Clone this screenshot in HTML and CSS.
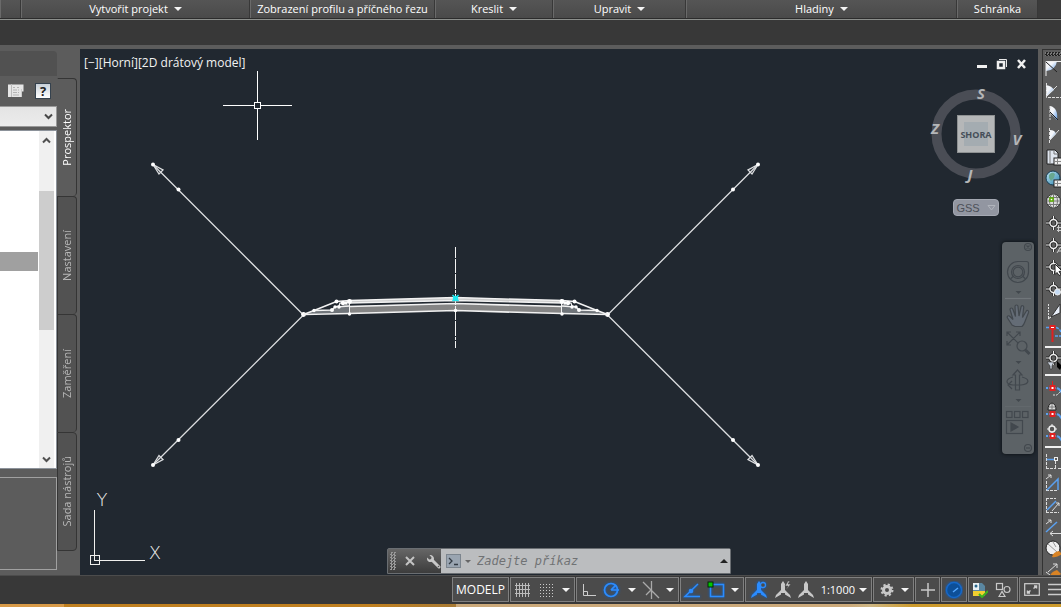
FILE: index.html
```html
<!DOCTYPE html>
<html lang="cs">
<head>
<meta charset="utf-8">
<meta name="viewport" content="width=device-width, initial-scale=1">
<title>Civil 3D</title>
<link rel="stylesheet" href="styles.css">
</head>
<body>
<svg class="defs" aria-hidden="true">
  <defs>
    <linearGradient id="sky" x1="0" y1="0" x2="1" y2="1"><stop offset=".4" stop-color="#f4f6fa"/><stop offset="1" stop-color="#5b9bea"/></linearGradient>
    <linearGradient id="ball" x1="0" y1="0" x2="1" y2="1"><stop offset="0" stop-color="#bfe6f4"/><stop offset="1" stop-color="#2d83ad"/></linearGradient>
    <filter id="glow" x="-40%" y="-40%" width="180%" height="180%"><feDropShadow dx="0" dy="0" stdDeviation="1.5" flood-color="#0a5fd0"/></filter>
    <symbol id="target" viewBox="0 0 16 22">
      <path d="M8.500 4v4M8.500 14v4M1 11h4M12 11h4" stroke="#222" stroke-width="3"/>
      <circle cx="8.500" cy="11" r="3.500" fill="none" stroke="#222" stroke-width="3"/>
      <path d="M8.500 4v4M8.500 14v4M1 11h4M12 11h4" stroke="#eee" stroke-width="1.200"/>
      <circle cx="8.500" cy="11" r="3.500" fill="none" stroke="#eee" stroke-width="1.400"/>
    </symbol>
    <symbol id="knot" viewBox="0 0 16 22">
      <path d="M1 14h2M12 14l2 1 3 4" stroke="#5aa0f0" stroke-width="2" fill="none"/>
      <path d="M4 14h7" stroke="#5aa0f0" stroke-width="2"/>
      <rect x="5.500" y="12" width="4" height="4" fill="#fff" stroke="#e02020" stroke-width="2"/>
    </symbol>
    <symbol id="compass" viewBox="0 0 18 20">
      <path d="M9 1l2 3v6l5 5 1 3-6-3.500V13H7v1.500L1 18l1-3 5-5V4z" fill="currentColor"/>
    </symbol>
  </defs>
</svg>

<header class="ribbon">
  <span class="ribbon-cell"></span>
  <button class="ribbon-cell">Vytvořit projekt<i class="caret"></i></button>
  <button class="ribbon-cell">Zobrazení profilu a příčného řezu</button>
  <button class="ribbon-cell">Kreslit<i class="caret"></i></button>
  <button class="ribbon-cell">Upravit<i class="caret"></i></button>
  <button class="ribbon-cell">Hladiny<i class="caret"></i></button>
  <button class="ribbon-cell">Schránka</button>
</header>
<div class="ribbon-gap"></div>

<main class="workspace">
  <aside class="toolspace">
    <section class="panel">
      <div class="panel-head"></div>
      <div class="panel-tools">
        <button aria-label="Panorama"><svg width="16" height="14" viewBox="0 0 16 14"><path d="M0 .5h15.500v7H13V13H0z" fill="#e6e6e6"/><path d="M3.500 0v13" stroke="#bbb"/><path d="M5 3.500h2M9 3.500h2M5 6h4M10 6h1M5 8.500h4M10 8.500h1M5 11h6" stroke="#b4b4b4"/><path d="M13.500 5v8" stroke="#ccc"/></svg></button>
        <button class="help" aria-label="Nápověda">?</button>
      </div>
      <div class="select-wrap">
        <select class="view-select" aria-label="Zobrazení"><option></option></select>
        <svg class="select-arrow" width="9" height="7" viewBox="0 0 9 7"><path d="M1 1.500l3.500 3.500 3.500-3.500" fill="none" stroke="#484848" stroke-width="2"/></svg>
      </div>
      <div class="tree">
        <div class="tree-body"><div class="tree-row"></div></div>
        <div class="scroll">
          <button aria-label="Nahoru"><svg width="9" height="7" viewBox="0 0 9 7"><path d="M1 5.500l3.500-3.500 3.500 3.500" fill="none" stroke="#505050" stroke-width="2"/></svg></button>
          <div class="scroll-track"><div class="thumb"></div></div>
          <button aria-label="Dolů"><svg width="9" height="7" viewBox="0 0 9 7"><path d="M1 1.500l3.500 3.500 3.500-3.500" fill="none" stroke="#505050" stroke-width="2"/></svg></button>
        </div>
      </div>
      <div class="preview"></div>
    </section>
    <nav class="tabs">
      <button class="tab active"><span>Prospektor</span></button>
      <button class="tab"><span>Nastavení</span></button>
      <button class="tab"><span>Zaměření</span></button>
      <button class="tab"><span>Sada nástrojů</span></button>
    </nav>
  </aside>

  <section class="viewport">
    <svg class="drawing" viewBox="80 49 958 526" fill="none" stroke="#f2f2f2">
      <g class="crisp" stroke="#fff"><path d="M223 105.500h31M261 105.500h31M257.500 71v31M257.500 109v31"/><rect x="254.500" y="102.500" width="6" height="6"/></g>
      <g stroke="#dcdee0" stroke-width="1.300">
        <path d="M153 164.500L303.500 315L153 465M758 164.500L607.500 315L758 465"/>
        <path d="M153 164.500l6 9.500 4-4zM153 465l6-9.500 4 4zM758 164.500l-6 9.500-4-4zM758 465l-6-9.500-4 4z"/>
      </g>
      <g fill="#fff" stroke="none">
        <circle cx="153" cy="164.500" r="2"/><circle cx="178.500" cy="189.500" r="2"/><circle cx="153" cy="465" r="2"/><circle cx="178.500" cy="440" r="2"/>
        <circle cx="758" cy="164.500" r="2"/><circle cx="733" cy="189.500" r="2"/><circle cx="758" cy="465" r="2"/><circle cx="733" cy="440" r="2"/>
        <circle cx="303.500" cy="314.500" r="2.400"/><circle cx="607.500" cy="314.500" r="2.400"/>
      </g>
      <path d="M349.500 306L455.500 303L562 306V313.500L455.500 310.500L349.500 313.500z" fill="#858585" stroke="none"/>
      <path d="M314 310.500L332 310L349.500 303V313L304 314zM597 310.500L579 310L562 303V313L607 314z" fill="#70757a" stroke="none"/>
      <path d="M349.500 300.500L455.500 297.500L562 300.500V303L455.500 300.500L349.500 303z" fill="#ccc" stroke-width="1.300"/>
      <path d="M349.500 306.500L455.500 303.500L562 306.500" stroke-width="1.700"/>
      <path d="M303.500 314.500L349.500 313.500L455.500 310.500L562 313.500L607.500 314.500" stroke-width="1.700"/>
      <path d="M303.500 314.500L314 310.500L336.500 301.500L349.500 300.500M607.500 314.500L597 310.500L574.500 301.500L562 300.500" stroke-width="1.700"/>
      <path d="M314 310.500L332 310L335 307L349.500 306M335 307l4-1 1-3 9-1M597 310.500L579 310L576 307L562 306M576 307l-4-1-1-3-9-1" stroke-width="1.300"/>
      <path d="M349.500 299v15M561.500 299v15"/>
      <g fill="#fff" stroke="none">
        <circle cx="336.500" cy="301.500" r="2"/><circle cx="314" cy="310.500" r="1.700"/><circle cx="332" cy="310" r="2"/><circle cx="335" cy="307" r="1.700"/><circle cx="339" cy="307" r="1.700"/><circle cx="343" cy="303" r="2.200"/><circle cx="346" cy="303" r="1.700"/><circle cx="349.500" cy="301.500" r="2.400"/><circle cx="349.500" cy="314" r="1.700"/>
        <circle cx="574.500" cy="301.500" r="2"/><circle cx="597" cy="310.500" r="1.700"/><circle cx="579" cy="310" r="2"/><circle cx="576" cy="307" r="1.700"/><circle cx="572" cy="307" r="1.700"/><circle cx="568" cy="303" r="2.200"/><circle cx="565" cy="303" r="1.700"/><circle cx="562" cy="301.500" r="2.400"/><circle cx="562" cy="314" r="1.700"/>
      </g>
      <path class="crisp" d="M455.500 247v101" stroke-dasharray="11 1 14 1 15 1 3 1"/>
      <circle cx="455.500" cy="310.500" r="1.700" fill="#fff" stroke="none"/>
      <path d="M452.500 295l6 6M452.500 301l6-6" stroke="#20e8f0" stroke-width="1.500"/><circle cx="455.500" cy="298.500" r="2.700" fill="#20e8f0" stroke="none"/>
      <g class="crisp" stroke="#f0f0ee"><path d="M94.500 510v50.500H145"/><rect x="90.500" y="555.500" width="9" height="9"/></g>
      <text class="axis" x="102" y="506">Y</text><text class="axis" x="155" y="559">X</text>
    </svg>

    <h1 class="view-label">[−][Horní][2D drátový model]</h1>

    <div class="window-buttons">
      <button aria-label="Minimalizovat"><svg width="12" height="12" viewBox="0 0 12 12"><path d="M1 8.500h10" stroke="#f0f0f0" stroke-width="3"/></svg></button>
      <button aria-label="Obnovit"><svg width="12" height="12" viewBox="0 0 12 12"><path d="M3 1.500h7.500V9" fill="none" stroke="#e8e8e8"/><rect x="2" y="4" width="6" height="6" fill="none" stroke="#f0f0f0" stroke-width="2.500"/></svg></button>
      <button aria-label="Zavřít"><svg width="12" height="12" viewBox="0 0 12 12"><path d="M2 2l7 8M9 2l-7 8" stroke="#f0f0f0" stroke-width="2.500"/></svg></button>
    </div>

    <div class="cube">
      <svg width="96" height="100" viewBox="928 84 96 100">
        <circle cx="976" cy="134" r="39.500" fill="none" stroke="#4a4d55" stroke-width="10"/>
        <rect x="957.500" y="115.500" width="37" height="37" fill="#b5b7b8" stroke="#8e9192"/>
        <rect x="964" y="122" width="24" height="24" fill="#a4acb1"/>
        <text class="cube-face" x="976" y="138">SHORA</text>
        <text class="cube-dir" x="981" y="99">S</text><text class="cube-dir" x="935" y="134">Z</text>
        <text class="cube-dir" x="1017" y="145">V</text><text class="cube-dir" x="970" y="180">J</text>
      </svg>
      <button class="ucs">GSS<svg width="9" height="6" viewBox="0 0 9 6"><path d="M1 .5h7L4.500 5z" fill="none" stroke="#b0b4bc"/></svg></button>
    </div>

    <nav class="navbar" aria-label="Navigace">
      <svg width="32" height="212" viewBox="1002 242 32 212" fill="none" stroke="#42484e" stroke-width="1.200">
        <circle cx="1028" cy="247" r="3.500"/><path d="M1026.500 245.500l3 3M1029.500 245.500l-3 3"/>
        <path d="M1028.500 272a10.500 10.500 0 1 1-10.500-10.500h8.500q2 0 2 2z"/><circle cx="1018" cy="272" r="6.500"/><circle cx="1018" cy="272" r="4.800"/><path d="M1010.500 279l3-3M1025.500 279l-3-3"/>
        <path d="M1015.500 291h6l-3 3z" fill="#42484e" stroke="none"/><path d="M1005 298.500h26" stroke="#70767a"/>
        <path d="M1012 325l-4.500-7c-1-2 1-3 2.500-1.500l3 3-3-10c0-2 2.500-2 3 0l2.500 7-.5-10c0-2 3-2 3 0l1 9.500 2-9c.5-2 3-1.500 2.700.5l-1.200 10 3.500-6c1-2 3-1 2.500 1l-3.500 9c-1 3-2 4-3 5h-7z" fill="#646c76"/>
        <path d="M1007 332l13 13M1020 332l-13 13M1007 336v-4h4M1016 332h4v4M1007 341v4h4"/><circle cx="1022" cy="346" r="5" fill="#5c6266"/><path d="M1025.500 350l4 4" stroke-width="3"/>
        <path d="M1015.500 361h6l-3 3zM1015.500 399h6l-3 3z" fill="#42484e" stroke="none"/>
        <path d="M1015.500 390v-15h-2.500l4.500-5 4.500 5h-2.500v15h-4z"/><path d="M1013 377c-8 2-8 7 0 8h8c9-1 9-6 1-8M1012 381l-4 4 4 4"/>
        <path d="M1005 406.500h26" stroke="#62686c"/>
        <rect x="1006.500" y="411.500" width="5.500" height="6"/><rect x="1014.500" y="411.500" width="5.500" height="6"/><rect x="1022.500" y="411.500" width="5.500" height="6"/>
        <rect x="1006.500" y="420.500" width="16" height="13"/><path d="M1011 423l7 4-7 4z" fill="#42484e"/>
        <circle cx="1028" cy="448" r="3.500"/><path d="M1026 448h4"/>
      </svg>
    </nav>

    <form class="command">
      <div class="command-grip">
        <i class="grip-dots"></i>
        <button type="button" aria-label="Zavřít"><svg width="10" height="10" viewBox="0 0 10 10"><path d="M1 1l8 8M9 1l-8 8" stroke="#c4c4c4" stroke-width="2"/></svg></button>
        <button type="button" aria-label="Přizpůsobit"><svg width="15" height="15" viewBox="0 0 15 15"><path d="M6 6l7 7" stroke="#c8c8c8" stroke-width="3" stroke-linecap="round"/><path d="M3.500 1.200l2 2-.3 2-2 .3-2-2C.5 6 2 8 4.500 8S8 6 8 4.500 6 .5 3.500 1.200z" fill="#c8c8c8"/><circle cx="12.500" cy="12.500" r=".8" fill="#555"/></svg></button>
      </div>
      <div class="command-box">
        <svg width="15" height="14" viewBox="0 0 15 14"><rect x=".5" y=".5" width="14" height="13" fill="#9aa5b1" stroke="#7c858e"/><path d="M3 4l3 3-3 3M8 10.500h4" fill="none" stroke="#333b44" stroke-width="1.300"/></svg>
        <i class="caret small"></i>
        <input type="text" placeholder="Zadejte příkaz" aria-label="Příkaz">
        <button type="button" aria-label="Historie"><i class="caret-up"></i></button>
      </div>
    </form>
  </section>

  <aside class="toolbar">
    <i class="toolbar-grip"></i>
    <button aria-label="Oblouk 1"><svg viewBox="0 0 16 22"><path d="M1 3h11a11 11 0 0 1-11 10z" fill="url(#sky)"/><path d="M1 18V3.500h15" stroke="#eee"/><path d="M1 4l11 10" stroke="#222"/></svg></button>
    <button aria-label="Oblouk 2"><svg viewBox="0 0 16 22"><path d="M1 5q6 1 8 5l-8 7z" fill="url(#sky)"/><path d="M1 17L12 6" stroke="#ddd"/><path d="M1.500 3v14.500H16" stroke="#ddd" stroke-dasharray="3 1"/></svg></button>
    <button aria-label="Oblouk 3"><svg viewBox="0 0 16 22"><path d="M5 4c6 1 8 7 7 14L5 11z" fill="url(#sky)"/><path d="M5 4v14" stroke="#ddd" stroke-dasharray="3 1"/><path d="M5 10l8 8" stroke="#222"/></svg></button>
    <button aria-label="Oblouk 4"><svg viewBox="0 0 16 22"><path d="M5 6q5 0 6 4l-6 6z" fill="url(#sky)"/><path d="M5 16l9-10" stroke="#ddd"/><path d="M4.500 4v15" stroke="#ddd" stroke-dasharray="3 1"/></svg></button>
    <button aria-label="Výkres"><svg viewBox="0 0 16 22"><path d="M2 4h8l3 3v11H2z" fill="#dfe5ee" stroke="#222"/><path d="M5 5v12M9 4v4h4" stroke="#777"/><rect x="9" y="12" width="8" height="7" fill="#eee" stroke="#222"/><path d="M9 15.500h7M12.500 12v7" stroke="#888"/></svg></button>
    <button aria-label="Glóbus"><svg viewBox="0 0 16 22"><circle cx="8" cy="10" r="7" fill="url(#ball)" stroke="#163a50"/><path d="M4 7q3-4 6-1l-1 4-3 3-2-3z" fill="#68a890"/><rect x="9" y="12" width="8" height="7" fill="#eee" stroke="#222"/><path d="M9 15.500h7M12.500 12v7" stroke="#888"/></svg></button>
    <button aria-label="Poloha"><svg viewBox="0 0 16 22"><circle cx="8.500" cy="11" r="7" fill="#ddd" stroke="#333"/><path d="M1.500 11h14M8.500 4v14M3 7.500h11M3 14.500h11" stroke="#777"/><ellipse cx="8.500" cy="11" rx="4" ry="7" stroke="#777"/><rect x="5" y="8" width="3" height="3" fill="#fff" stroke="#5aae00" stroke-width="1.500"/></svg></button>
    <button aria-label="Bod 1"><svg viewBox="0 0 16 22"><use href="#target"/><path d="M12 15.500h5M12 18.500h5M13.500 13v7" stroke="#ccc"/></svg></button>
    <button aria-label="Bod 2"><svg viewBox="0 0 16 22"><use href="#target"/><path d="M12 19l3.500-6 2 5M13 17h4" stroke="#ccc"/></svg></button>
    <button aria-label="Bod 3"><svg viewBox="0 0 16 22"><use href="#target"/><path d="M10 8l7 7-3 .5 2 3-2 1-2-3-2 2z" fill="#fff" stroke="#222"/></svg></button>
    <button aria-label="Bod 4"><svg viewBox="0 0 16 22"><use href="#target"/><circle cx="12.500" cy="14" r="3" fill="#c4daf4" stroke="#eee"/></svg></button>
    <button aria-label="Profil"><svg viewBox="0 0 16 22"><path d="M3.500 4v14" stroke="#ddd" stroke-dasharray="2 1"/><path d="M15 4v9l-9 4z" fill="#e8eef8" stroke="#333"/><path d="M6 17l-3 2" stroke="#fff"/></svg></button>
    <button aria-label="Trasa"><svg viewBox="0 0 16 22"><path d="M1 5.500h3M11 5.500q4 1 5 5M10 14h6" stroke="#5aa0f0" stroke-width="1.500" stroke-dasharray="3 1"/><path d="M7.500 6v14" stroke="#e02020" stroke-width="2"/><rect x="5.500" y="4" width="4" height="3" fill="#fff" stroke="#e02020" stroke-width="2"/></svg></button>
    <hr>
    <button aria-label="Filtr"><svg viewBox="0 0 16 22"><use href="#target" y="-3"/><path d="M2 12h7l-2 4v3H5v-3z" fill="#ccd4e0" stroke="#333" stroke-width=".7"/><path d="M12 11l5 5-2 4-3-3z" fill="#000"/></svg></button>
    <hr>
    <button aria-label="Uzel 1"><svg viewBox="0 0 16 22"><path d="M7.500 3v8" stroke="#e02020"/><use href="#knot" y="-4"/><path d="M8 17h4l4-4" stroke="#ddd" stroke-dasharray="2 1"/></svg></button>
    <button aria-label="Uzel 2"><svg viewBox="0 0 16 22"><path d="M3 10q0-6 4-7 4 1 4 7z" fill="#ddd" stroke="#222"/><path d="M4 7h6M7 4v5" stroke="#777"/><use href="#knot"/></svg></button>
    <button aria-label="Uzel 3"><svg viewBox="0 0 16 22"><circle cx="7" cy="7" r="3" fill="#555" stroke="#eee" stroke-width="1.500"/><path d="M7 2v2M7 10v2M2 7h2M10 7h2" stroke="#eee"/><use href="#knot"/></svg></button>
    <hr>
    <button aria-label="Kóta 1"><svg viewBox="0 0 16 22"><path d="M1.500 4v15M1 18.500h10M13 18.500h3M10.500 11v8" stroke="#ddd" stroke-dasharray="3 1"/><path d="M2 9.500h7" stroke="#5aa0f0" stroke-width="1.500"/><rect x="9.500" y="7.500" width="3" height="3" stroke="#eee"/></svg></button>
    <button aria-label="Kóta 2"><svg viewBox="0 0 16 22"><path d="M1.500 9v10M1 18.500h12" stroke="#ddd" stroke-dasharray="3 1"/><path d="M2 18L13 7v11" stroke="#5aa0f0" stroke-width="1.500"/><path d="M1 7l5-4M3 3h3v3" stroke="#ddd"/></svg></button>
    <button aria-label="Kóta 3"><svg viewBox="0 0 16 22"><path d="M1.500 4v15M1 4.500h10M1 18.500h13" stroke="#ddd" stroke-dasharray="3 1"/><path d="M2 16l9-9" stroke="#5aa0f0" stroke-width="1.500"/><path d="M7 17l7-8M11 9h3v3" stroke="#ddd"/></svg></button>
    <button aria-label="Kóta 4"><svg viewBox="0 0 16 22"><path d="M1 8l5-4M3 4h3v3M5 17.500h12M8 15l-3 2.500 3 2.500" stroke="#ddd"/><path d="M1 16L12 6" stroke="#5aa0f0" stroke-width="1.500"/></svg></button>
    <button aria-label="Styl"><svg viewBox="0 0 16 22"><circle cx="8" cy="10" r="7" fill="#eee" stroke="#222"/><path d="M3 6l9 8M8 4l3 5" stroke="#999"/><path d="M7 19q1-5 7-6l3 3q-5 4-10 3z" fill="#d98324"/></svg></button>
    <button aria-label="Úprava"><svg viewBox="0 0 16 22"><path d="M3 12l9-8M8 4h4v4M1 12l4 3" stroke="#ddd"/><path d="M5 16q1-4 7-6l4 4q-5 4-11 2z" fill="#d98324"/></svg></button>
  </aside>
</main>

<footer class="status">
  <div class="group model"><button>MODELP</button></div>
  <div class="group grid-group">
    <button aria-label="Mřížka"><svg width="16" height="16" viewBox="0 0 16 16"><path d="M0 3.500h15M0 7.500h15M0 11.500h15M1.500 1v14M4.500 1v14M7.500 1v14M10.500 1v14M13.500 1v14" stroke="#bbb"/></svg></button>
    <button aria-label="Krok"><svg width="16" height="16" viewBox="0 0 16 16"><path d="M1 2.500h14M1 5.500h14M1 8.500h14M1 11.500h14M1 14.500h14" stroke="#ccc" stroke-dasharray="1 2"/></svg></button>
    <button aria-label="Možnosti kroku"><i class="caret"></i></button>
  </div>
  <div class="group ortho-group">
    <button aria-label="Orto"><svg width="16" height="16" viewBox="0 0 16 16" fill="none" stroke="#ccc"><path d="M2.500 2v11.500H15M2 9.500h4.500v4"/></svg></button>
    <button aria-label="Polární"><svg width="18" height="18" viewBox="0 0 18 18" fill="none" stroke="#2b8cff" stroke-width="1.700" filter="url(#glow)"><circle cx="8" cy="9" r="6.500"/><path d="M8 9h8M8 9l5-5"/></svg></button>
    <button aria-label="Úhly"><i class="caret"></i></button>
    <button aria-label="Izometrie"><svg width="18" height="20" viewBox="0 0 18 20" stroke="#aaa" stroke-width="1.300"><path d="M1 2l16 16M9.500 1v18M9 10l-5 5"/></svg></button>
    <button aria-label="Roviny"><i class="caret"></i></button>
  </div>
  <div class="group snap-group">
    <button aria-label="Trasování"><svg width="18" height="18" viewBox="0 0 18 18" fill="none" stroke="#2b8cff" stroke-width="1.500" filter="url(#glow)"><path d="M15 3L2 15.500h15"/><circle cx="8" cy="10" r="1.500" fill="#2b8cff"/></svg></button>
    <button aria-label="Uchopení"><svg width="18" height="18" viewBox="0 0 18 18" fill="none"><rect x="3.500" y="3.500" width="13" height="12" stroke="#2b8cff" stroke-width="1.500" filter="url(#glow)"/><rect x="1" y="1" width="5" height="5" fill="#00c800" stroke="#042404"/></svg></button>
    <button aria-label="Typy uchopení"><i class="caret"></i></button>
  </div>
  <div class="group scale-group">
    <button class="blue" aria-label="Poznámky"><svg width="18" height="20" filter="url(#glow)"><use href="#compass"/><circle cx="13" cy="5" r="2.500" fill="#4b4b4b" stroke="#2b8cff" stroke-width="1.300"/></svg></button>
    <button aria-label="Automatické měřítko"><svg width="18" height="20"><use href="#compass"/><path d="M14 1l-3 5h3l-2 4 5-6h-3l2-3z" fill="#c8c8c8" stroke="#444" stroke-width=".6"/></svg></button>
    <button aria-label="Měřítko"><svg width="18" height="20"><use href="#compass"/></svg></button>
    <button class="scale">1:1000<i class="caret"></i></button>
  </div>
  <div class="group gear-group">
    <button aria-label="Pracovní prostor"><svg width="14" height="14" viewBox="0 0 14 14" fill="none" stroke="#c8c8c8"><circle cx="7" cy="7" r="3.500" stroke-width="3"/><circle cx="7" cy="7" r="5.500" stroke-width="2" stroke-dasharray="2.200 2.120"/></svg></button>
    <button aria-label="Výběr prostoru"><i class="caret"></i></button>
  </div>
  <div class="group plus-group"><button aria-label="Monitor"><svg width="14" height="14" viewBox="0 0 14 14"><path d="M7 0v14M0 7h14" stroke="#c8c8c8" stroke-width="1.500"/></svg></button></div>
  <div class="group perf-group"><button aria-label="Výkon"><svg width="18" height="18" viewBox="0 0 18 18"><circle cx="9" cy="9" r="7.500" fill="#0b4f98" stroke="#1468c8" stroke-width="1.500" filter="url(#glow)"/><path d="M8 11l5-4" stroke="#55a8ff" stroke-width="1.500"/></svg></button></div>
  <div class="group iso-group">
    <button aria-label="Geolokace"><svg width="16" height="16" viewBox="0 0 16 16"><path d="M1 1h9l3 3v9H1z" fill="#5a86a0"/><path d="M1 1h6v7H1z" fill="#e8f0f4"/><circle cx="4" cy="4" r="1.500" fill="#28668c"/><path d="M1 9h12v5H1z" fill="#f2cf30"/><path d="M7 12l3 3 6-6" fill="none" stroke="#3cb020" stroke-width="2"/></svg></button>
    <button aria-label="Izolace"><svg width="16" height="16" viewBox="0 0 16 16" fill="none" stroke="#c8c8c8" stroke-width="1.200"><rect x="1.500" y="1.500" width="6" height="6"/><circle cx="12" cy="7.500" r="3"/><path d="M4 14.500l3-5 3 5z"/></svg></button>
  </div>
  <div class="group full-group">
    <button aria-label="Celá obrazovka"><svg width="16" height="13" viewBox="0 0 16 13" fill="none" stroke="#d0d0d0" stroke-width="1.200"><rect x=".7" y=".7" width="14.600" height="11.600"/><path d="M9.500 5.500l3-2.500M10 3h2.500v2.500M6.500 7.500L3.500 10M3.500 7.500V10H6" stroke-width="1.500"/></svg></button>
    <button aria-label="Přizpůsobení"><svg width="16" height="13" viewBox="0 0 16 13"><path d="M3 1.500h13M3 6.500h13M3 11.500h13" stroke="#ccc" stroke-width="1.600"/></svg></button>
  </div>
</footer>
<div class="taskbar"></div>
</body>
</html>
```

FILE: styles.css
```css
* { box-sizing: border-box; }

body {
  margin: 0;
  height: 100vh;
  display: flex;
  flex-direction: column;
  overflow: hidden;
  background: #5c5c5c;
  color: #f2f2f2;
  font: 11px/16px "Open Sans", "Noto Sans", sans-serif;
}

button {
  margin: 0;
  padding: 0;
  border: 0;
  background: none;
  color: inherit;
  font: inherit;
  display: flex;
  align-items: center;
  justify-content: center;
}

svg { display: block; flex: none; }
.defs { position: absolute; width: 0; height: 0; }
.crisp { shape-rendering: crispEdges; }

.caret {
  border: 4px solid transparent;
  border-top-color: #f4f4f4;
  border-bottom: 0;
}
.caret.small { border-width: 3px; border-bottom: 0; border-top-color: #666; }
.caret-up { border: 4px solid transparent; border-bottom-color: #222; border-top: 0; }

/* Ribbon */
.ribbon {
  flex: none;
  height: 18px;
  display: grid;
  grid-template-columns: 21fr 229fr 185fr 118fr 133fr 271fr 81fr 23fr;
  background: #3b3b3b;
}
.ribbon-cell {
  gap: 6px;
  background: linear-gradient(#555, #4a4a4a);
  border-right: 1px solid #383838;
  border-left: 1px solid #6a6a6a;
  color: #fff;
  white-space: nowrap;
}
.ribbon-gap {
  flex: none;
  height: 27px;
  background: #383838;
  border-top: 1px solid #2c2c2c;
  box-shadow: inset 0 1px #8c8f8c;
}

/* Workspace */
.workspace { flex: 1; min-height: 0; display: flex; padding-top: 4px; }

.toolspace { flex: none; width: 80px; display: flex; }
.panel { width: 57px; display: flex; flex-direction: column; padding-top: 2px; padding-bottom: 5px; }
.panel-head { height: 25px; background: #515151; border-top-right-radius: 4px; }
.panel-tools { height: 30px; display: flex; align-items: center; justify-content: flex-end; gap: 11px; padding: 0 6px 1px 0; }
.help {
  width: 16px;
  height: 16px;
  background: linear-gradient(#c8d0d8, #fff);
  border: 1px solid #35424e;
  color: #222;
  font-size: 13px;
  font-weight: 700;
}
.select-wrap { position: relative; height: 21px; }
.view-select {
  display: block;
  appearance: none;
  width: 100%;
  height: 100%;
  border: 1px solid #999;
  border-left: 0;
  border-radius: 0;
  background: linear-gradient(#e4e4e4, #ececec);
}
.select-arrow { position: absolute; top: 7px; right: 4px; pointer-events: none; }
.tree {
  flex: 1;
  margin-top: 3px;
  display: flex;
  background: #fff;
  border: 1px solid #8c929a;
  border-left: 0;
}
.tree-body { width: 38px; padding-top: 121px; }
.tree-row { height: 19px; background: #a0a0a0; }
.scroll { width: 15px; margin-left: 1px; background: #f0f0f0; display: flex; flex-direction: column; }
.scroll button { height: 18px; }
.scroll-track { flex: 1; padding-top: 42px; }
.thumb { height: 139px; background: #cdcdcd; }
.preview { height: 93px; margin-top: 8px; border: 1px solid #a0a0a0; border-left: 0; }

.tabs { width: 20px; padding-top: 29px; display: flex; flex-direction: column; }
.tab {
  width: 20px;
  height: 118px;
  border: 1px solid #353535;
  border-bottom-width: 0;
  border-radius: 0 4px 4px 0;
  background: #525252;
  color: #b8b8b8;
}
.tab:last-child { border-bottom-width: 1px; height: 119px; }
.tab.active { background: #5c5c5c; border-left-color: #5c5c5c; color: #fff; }
.tab span { writing-mode: vertical-rl; transform: rotate(180deg); }

/* Drawing area */
.viewport { position: relative; flex: 1; min-width: 0; background: #212830; overflow: hidden; }
.drawing { width: 100%; height: 100%; }
.axis { font: 200 18px "DejaVu Sans Light", "DejaVu Sans", sans-serif; fill: #f0f0ee; stroke: none; text-anchor: middle; }
.view-label { position: absolute; top: 6px; left: 4px; margin: 0; font-size: 12px; font-weight: 400; line-height: 16px; }
.window-buttons { position: absolute; top: 9px; right: 10px; display: flex; gap: 8px; }
.cube { position: absolute; top: 35px; right: 14px; display: flex; flex-direction: column; align-items: center; gap: 15px; }
.cube-face { font: 700 9px "Open Sans", sans-serif; fill: #444e58; text-anchor: middle; }
.cube-dir { font: italic 700 15px "Noto Sans", sans-serif; fill: #b4b6b8; text-anchor: middle; }
.ucs {
  width: 46px;
  height: 17px;
  gap: 7px;
  border: 1px solid #a4a8b2;
  border-radius: 4px;
  background: #9296a1;
  color: #4c5058;
  font-family: "Liberation Sans", sans-serif;
}
.navbar {
  position: absolute;
  top: 193px;
  right: 4px;
  border-radius: 4px;
  background: #5c6266;
  box-shadow: 0 0 3px 1px #12171c;
}

.command {
  position: absolute;
  bottom: 1px;
  left: 0;
  right: 0;
  width: 344px;
  height: 26px;
  margin: 0 auto;
  display: flex;
  border: 1px solid #6a6e72;
  border-radius: 2px 2px 0 0;
}
.command-grip { width: 53px; display: flex; align-items: center; gap: 9px; padding-left: 2px; background: linear-gradient(#666, #3c3c3c); }
.grip-dots { width: 6px; height: 18px; background: repeating-conic-gradient(#999 0 25%, transparent 0 50%) 0 0 / 3px 3px; }
.command-grip button:first-of-type { margin-right: 2px; }
.command-box { flex: 1; display: flex; align-items: center; gap: 4px; padding: 0 2px 0 5px; background: #bbbdbf; }
.command-box input {
  flex: 1;
  min-width: 0;
  padding: 0 0 0 2px;
  border: 0;
  outline: 0;
  background: none;
  font: italic 12px "DejaVu Sans Mono", monospace;
}
.command-box input::placeholder { color: #707274; opacity: 1; }

/* Right toolbar */
.toolbar {
  flex: none;
  width: 19px;
  margin-left: 4px;
  padding-left: 2px;
  border-left: 1px solid #333;
  border-top: 1px solid #333;
  overflow: hidden;
}
.toolbar-grip { display: block; height: 8px; border: solid #5c5c5c; border-width: 2px 0; background: repeating-conic-gradient(#222 0 25%, #777 0 50%) 0 0 / 3px 3px; }
.toolbar button { width: 16px; height: 22px; }
.toolbar button svg { width: 16px; height: 22px; fill: none; }
.toolbar hr { height: 2px; margin: 2px 0; border: 0; background: #f0f0f0; }

/* Status bar */
.status {
  flex: none;
  height: 29px;
  display: flex;
  justify-content: flex-end;
  padding: 1px 0 2px;
  gap: 1px;
  background: #383838;
  border-top: 1px solid #4c4c4c;
  color: #fff;
}
.group { display: flex; align-items: center; justify-content: space-between; background: #4b4b4b; border: 1px solid #808080; color: #c8c8c8; }
.model { width: 57px; justify-content: center; color: #fff; font-size: 12px; }
.grid-group { width: 65px; padding: 0 4px; }
.ortho-group { width: 103px; padding: 0 4px; }
.snap-group { width: 64px; padding: 0 4px 0 2px; }
.scale-group { width: 127px; padding: 0 4px; }
.blue { color: #2b8cff; }
.scale { gap: 4px; color: #fff; }
.gear-group { width: 41px; padding: 0 4px 0 6px; }
.plus-group { width: 25px; justify-content: center; }
.perf-group { width: 26px; justify-content: center; }
.iso-group { width: 50px; padding: 0 6px 0 3px; }
.full-group { width: 42px; padding-left: 4px; border-right: 0; }

.taskbar {
  flex: none;
  height: 3px;
  background: linear-gradient(90deg, #d89a48 0 6%, #c08020 6% 35%, #a87a34 43%, #cba97a 43% 80%, #cdb684 82%, #cc9a2c 86%);
}
```
